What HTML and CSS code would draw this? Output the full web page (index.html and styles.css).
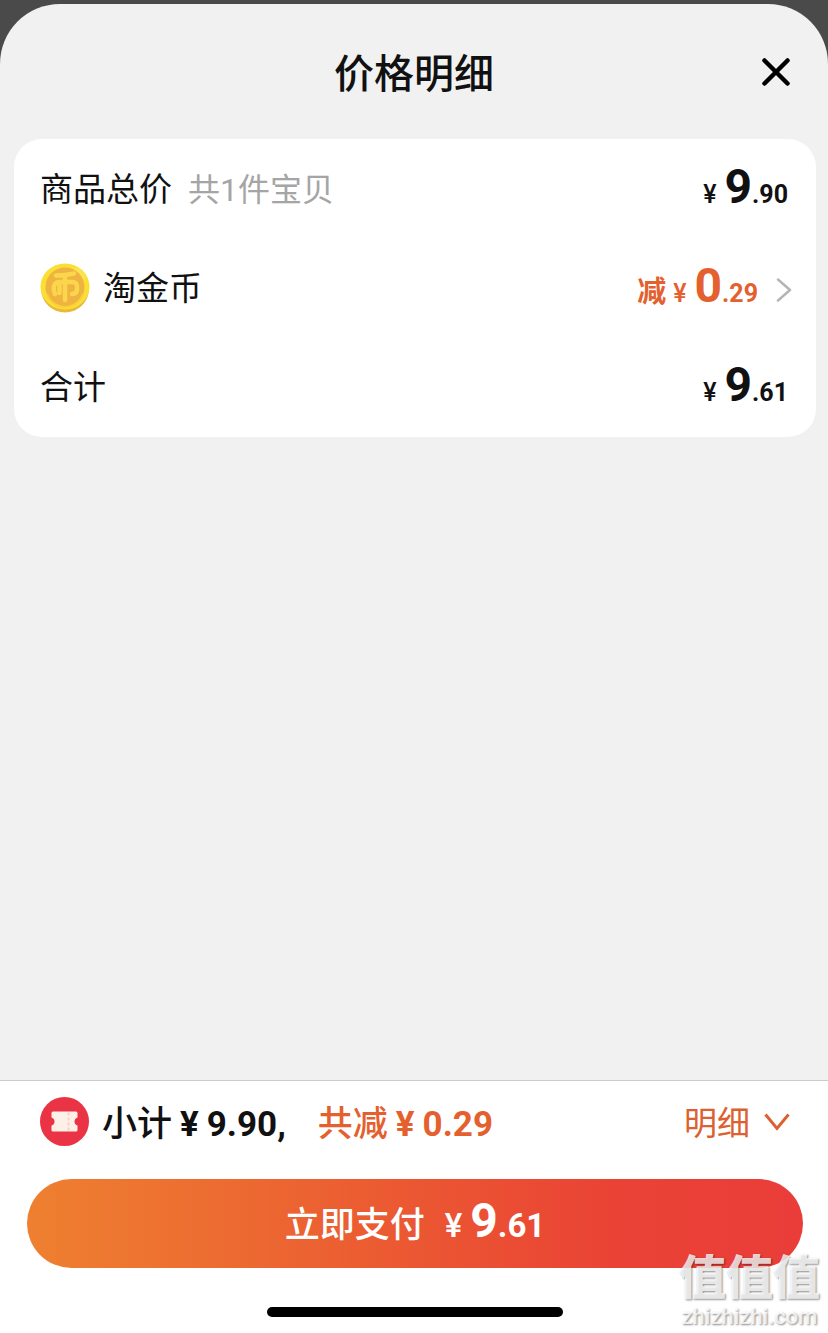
FILE: index.html
```html
<!DOCTYPE html>
<html lang="zh-CN">
<head>
    <meta charset="UTF-8">
    <meta name="viewport" content="width=device-width, initial-scale=1.0">
    <title>价格明细</title>
    <link rel="stylesheet" href="styles.css">
</head>
<body>

    <!-- Price detail sheet -->
    <div class="sheet">
        <header class="sheet-header">
            <h1>价格明细</h1>
            <button class="close-btn" type="button" aria-label="关闭">
                <svg width="28" height="28" viewBox="0 0 28 28" fill="none" stroke="#000" stroke-width="4.500" stroke-linecap="round">
                    <path d="M2.5 2.5 25.5 25.5M25.5 2.5 2.5 25.5"/>
                </svg>
            </button>
        </header>

        <main class="sheet-body">
            <section class="card">
                <div class="row">
                    <span class="label">商品总价</span>
                    <span class="note">共1件宝贝</span>
                    <span class="price"><span class="yen">¥</span><span class="int">9</span><span class="dec">.90</span></span>
                </div>
                <div class="row">
                    <svg class="coin" width="50" height="50" viewBox="0 0 50 50" fill="none">
                        <circle cx="25" cy="25.500" r="24" fill="#e9b93a"/>
                        <ellipse cx="25" cy="23.500" rx="24.500" ry="23" fill="#fbdf35"/>
                        <path d="M36 4a23 23 0 0 1 10 10L30 40 12 42Z" fill="#fdea6a" opacity=".5"/>
                        <circle cx="25" cy="24" r="19.500" fill="#efb440"/>
                        <path d="M7 31a19 19 0 0 0 36 0" stroke="#f9d03b" stroke-width="2"/>
                        <g stroke="#fbd54c" stroke-width="4.500" stroke-linecap="round" stroke-linejoin="round">
                            <path d="M16 12.500q10 0 18-2M25 12v25M15 31q-2-4-1-8 1-4 6-4h12q6 0 5 7 0 5-5 5M19.500 20v10"/>
                        </g>
                    </svg>
                    <span class="label">淘金币</span>
                    <a class="price discount" href="#"><span class="cut">减</span><span class="yen">¥</span><span class="int">0</span><span class="dec">.29</span>
                        <svg class="arrow" width="16" height="24" viewBox="0 0 16 24" fill="none" stroke="#b5b5b5" stroke-width="2.500" stroke-linecap="round" stroke-linejoin="round">
                            <path d="M2 1.500 14 12 2 22.500"/>
                        </svg>
                    </a>
                </div>
                <div class="row">
                    <span class="label">合计</span>
                    <span class="price"><span class="yen">¥</span><span class="int">9</span><span class="dec">.61</span></span>
                </div>
            </section>
        </main>

        <footer class="pay-bar">
            <div class="summary">
                <svg class="ticket" width="49" height="49" viewBox="0 0 49 49">
                    <circle cx="24.500" cy="24.500" r="24.500" fill="#ea3345"/>
                    <path d="M13 14.500h23q1.500 0 1.500 1.500v4.500q-3 1-3 4t3 4V33q0 1.500-1.500 1.500H13q-1.500 0-1.500-1.500v-4.500q3-1 3-4t-3-4V16q0-1.500 1.500-1.500Z" fill="#fdf0e9"/>
                    <path d="M28.500 15.500v18" stroke="#f8cfc5" stroke-width="2" stroke-dasharray="3 2"/>
                </svg>
                <span class="subtotal">小计<b>¥</b><b>9.90,</b></span>
                <span class="saved">共减<b>¥</b><b>0.29</b></span>
                <button class="detail-btn" type="button"><span>明细</span>
                    <svg width="26" height="18" viewBox="0 0 26 18" fill="none" stroke="#dc6030" stroke-width="3">
                        <path d="M1.500 1.500 13 15.500 24.500 1.500"/>
                    </svg>
                </button>
            </div>
            <button class="pay-btn" type="button">
                <span class="pay-text">立即支付</span>
                <span class="price"><span class="yen">¥</span><span class="int">9</span><span class="dec">.61</span></span>
            </button>
            <div class="home-bar"></div>
        </footer>
    </div>

    <!-- Site watermark -->
    <div class="watermark">
        <strong>值值值</strong>
        <span>zhizhizhi.com</span>
    </div>

</body>
</html>
```
FILE: styles.css
```css
* {
    box-sizing: border-box;
}

body {
    margin: 0;
    padding-top: 4px;
    min-height: 100vh;
    display: flex;
    position: relative;
    background: #4a4a4a;
    color: #111;
    font-family: Roboto, "Noto Sans CJK SC", sans-serif;
}

button {
    padding: 0;
    border: none;
    background: none;
    color: inherit;
    font-family: inherit;
    cursor: pointer;
}

svg {
    display: block;
    flex: none;
}

.sheet {
    flex: 1;
    display: flex;
    flex-direction: column;
    overflow: hidden;
    border-radius: 60px 60px 0 0;
    background: #f1f1f1;
}

/* Header */
.sheet-header {
    display: grid;
    grid-template-columns: 1fr auto 1fr;
    align-items: center;
    height: 135px;
    padding: 0 38px;
}

.sheet-header h1 {
    grid-column: 2;
    margin: 0;
    padding-bottom: 2px;
    font-size: 40px;
    font-weight: 500;
}

.close-btn {
    justify-self: end;
}

/* Price card */
.sheet-body {
    flex: 1;
    padding: 0 12px 0 14px;
}

.card {
    padding-bottom: 1px;
    border-radius: 28px;
    background: #fff;
}

.row {
    display: flex;
    align-items: center;
    height: 99px;
    padding: 0 28px 0 26px;
}

.label {
    padding-bottom: 4px;
    font-size: 33px;
}

.note {
    margin-left: 16px;
    padding-bottom: 4px;
    color: #a5a5a5;
    font-size: 32px;
}

.coin {
    margin-right: 13px;
}

/* Price with a large integer part */
.price {
    display: flex;
    align-items: baseline;
    margin-left: auto;
    padding-top: 4px;
    font-weight: 700;
    line-height: 56px;
}

.yen {
    margin-right: 8px;
    font-size: 25px;
    font-weight: 500;
}

.int {
    font-size: 48px;
}

.dec {
    font-size: 25px;
}

.discount {
    color: #e4602e;
    text-decoration: none;
}

.cut {
    margin-right: 7px;
    font-size: 29px;
}

.arrow {
    align-self: center;
    margin: 0 -4px 0 18px;
}

/* Bottom bar */
.pay-bar {
    padding: 16px 25px 16px 27px;
    border-top: 1px solid #ccc;
    background: #fff;
}

.summary {
    display: flex;
    align-items: center;
    height: 49px;
    padding: 0 13px;
}

.ticket {
    margin-right: 13px;
}

.subtotal,
.saved {
    padding-bottom: 2px;
    font-size: 35px;
    font-weight: 500;
}

.summary b {
    margin-left: 8px;
    font-weight: 700;
}

.saved {
    margin-left: 32px;
    color: #e4602e;
}

.detail-btn {
    display: flex;
    align-items: center;
    gap: 14px;
    margin-left: auto;
    color: #dc6030;
    font-size: 33px;
}

.detail-btn span {
    padding-bottom: 2px;
}

.pay-btn {
    display: flex;
    align-items: center;
    justify-content: center;
    gap: 20px;
    width: 100%;
    height: 89px;
    margin-top: 33px;
    border-radius: 45px;
    background: linear-gradient(90deg, #ee8030, #eb5732 50%, #ea4335 75%, #ea3d3a);
    color: #fff;
    font-size: 35px;
    font-weight: 500;
}

.pay-text {
    padding-bottom: 4px;
}

.pay-btn .price {
    margin: 0;
    padding: 0;
}

.pay-btn .yen,
.pay-btn .dec {
    font-size: 33px;
}

.home-bar {
    width: 296px;
    height: 10px;
    margin: 39px auto 0;
    border-radius: 5px;
    background: #000;
}

/* Watermark */
.watermark {
    position: absolute;
    right: 8px;
    bottom: 4px;
    display: flex;
    flex-direction: column;
    align-items: center;
    color: rgba(255, 255, 255, 0.8);
    text-shadow: 1px 1px 2px rgba(0, 0, 0, 0.45);
    pointer-events: none;
}

.watermark strong {
    font-size: 47px;
    font-weight: 900;
    line-height: 54px;
}

.watermark span {
    font-size: 22px;
    font-weight: 500;
    line-height: 24px;
}
```
